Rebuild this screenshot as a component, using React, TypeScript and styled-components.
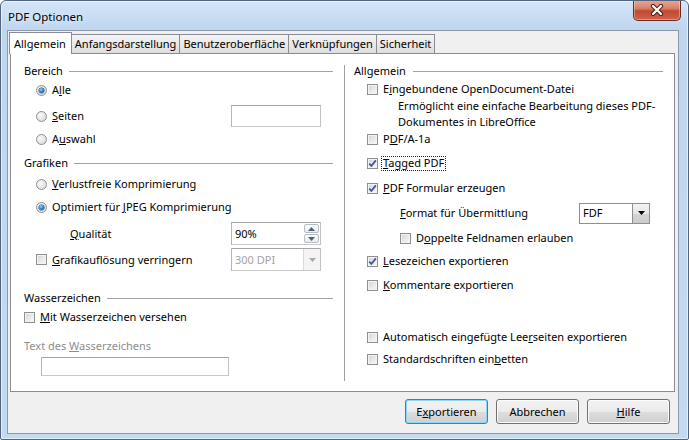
import React from "react";
import styled, { createGlobalStyle } from "styled-components";

const FONT = `"Noto Sans", "Open Sans", sans-serif`;

const GlobalStyle = createGlobalStyle`
  html, body { margin: 0; padding: 0; background: #ffffff; }
  body { font-family: ${FONT}; font-size: 11px; color: #000; }
  *, *::before, *::after { box-sizing: border-box; }
`;

const Window = styled.div`
  width: 689px;
  height: 440px;
  display: flex;
  flex-direction: column;
  border: 1px solid #52657c;
  border-radius: 6px 6px 2px 2px;
  background: linear-gradient(180deg, #d4e5f7 0px, #bfd6ef 29px, #c4daf1 100%);
  box-shadow: inset 0 0 0 1px rgba(255, 255, 255, 0.55);
  overflow: hidden;
`;

const TitleBar = styled.div`
  height: 29px;
  flex: none;
  display: flex;
  align-items: flex-start;
  padding-left: 7px;
`;

const Title = styled.div`
  margin-top: 8px;
  font-size: 11.5px;
  line-height: 16px;
  color: #000;
  text-shadow: 0 0 6px rgba(255, 255, 255, 0.9);
`;

const CloseButton = styled.div`
  margin-left: auto;
  margin-right: 7px;
  margin-top: -1px;
  width: 48px;
  height: 21px;
  border: 1px solid #6b2a20;
  border-top: none;
  border-radius: 0 0 5px 5px;
  background: linear-gradient(180deg, #e8a898 0%, #d98068 42%, #c24a31 55%, #d0614a 100%);
  box-shadow: inset 0 0 0 1px rgba(255, 255, 255, 0.35);
  display: flex;
  align-items: center;
  justify-content: center;
`;

const Client = styled.div`
  flex: 1;
  margin: 0 9px 5px 6px;
  border: 1px solid #8b99ab;
  background: #f0f0f0;
  display: flex;
  flex-direction: column;
`;

const TabStrip = styled.div`
  height: 22px;
  flex: none;
  display: flex;
  align-items: flex-end;
  padding-left: 1px;
  position: relative;
  z-index: 1;
`;

const Tab = styled.div<{ $active?: boolean }>`
  height: ${(p) => (p.$active ? 22 : 19)}px;
  margin-bottom: ${(p) => (p.$active ? -1 : 0)}px;
  margin-left: -1px;
  padding: 0 ${(p) => (p.$active ? 5 : 3)}px 0 ${(p) => (p.$active ? 4 : 3)}px;
  border: 1px solid #898c95;
  border-bottom: none;
  background: ${(p) =>
    p.$active ? "#ffffff" : "linear-gradient(180deg, #f4f4f4 0%, #e9e9e9 50%, #dedede 100%)"};
  position: relative;
  z-index: ${(p) => (p.$active ? 2 : 1)};
  display: flex;
  align-items: center;
  line-height: 16px;
  white-space: nowrap;
  &:first-child {
    margin-left: 0;
  }
`;

const Panel = styled.div`
  height: 339px;
  flex: none;
  margin: 0 3px 0 2px;
  border: 1px solid #898c95;
  background: #ffffff;
  display: grid;
  grid-template-columns: 333px 1px 1fr;
`;

const Column = styled.div<{ $pl: number; $pr: number }>`
  display: flex;
  flex-direction: column;
  padding: 0 ${(p) => p.$pr}px 0 ${(p) => p.$pl}px;
`;

const Separator = styled.div`
  margin: 11px 0 10px;
  background: #a0a0a0;
`;

const GroupHeader = styled.div<{ $mt: number; $gap?: number }>`
  display: flex;
  align-items: center;
  height: 16px;
  margin-top: ${(p) => p.$mt}px;
  line-height: 16px;
  white-space: nowrap;
  &::after {
    content: "";
    flex: 1;
    height: 1px;
    background: #a3a3a3;
    margin-left: ${(p) => p.$gap ?? 6}px;
  }
`;

const Row = styled.div<{ $mt?: number; $h?: number; $indent?: number }>`
  display: flex;
  align-items: center;
  gap: 5px;
  margin-top: ${(p) => p.$mt ?? 0}px;
  height: ${(p) => p.$h ?? 18}px;
  padding-left: ${(p) => p.$indent ?? 0}px;
  white-space: nowrap;
  line-height: 16px;
`;

const Label = styled.span<{ $disabled?: boolean }>`
  color: ${(p) => (p.$disabled ? "#8d8d8d" : "#000")};
`;

const FocusLabel = styled.span`
  line-height: 12px;
  padding: 0 1px 1px;
  margin-left: -2px;
  border: 1px dotted #222;
`;

const U = styled.span`
  text-decoration: underline;
  text-underline-offset: 1px;
`;

const Description = styled.div<{ $indent: number }>`
  padding-left: ${(p) => p.$indent}px;
  line-height: 16px;
  height: 32px;
`;

const Box = styled.span`
  width: 11px;
  height: 11px;
  flex: none;
  border: 1px solid #8e8f8f;
  background: linear-gradient(135deg, #cfd2d6 0%, #e9e9ea 55%, #f8f8f8 100%);
  box-shadow: inset 0 0 0 1px #f4f4f4;
  display: flex;
  align-items: center;
  justify-content: center;
`;

const RadioCircle = styled.span<{ $checked?: boolean }>`
  width: 11px;
  height: 11px;
  flex: none;
  border-radius: 50%;
  border: 1px solid #8e8f8f;
  background: radial-gradient(circle at 35% 35%, #fafafa 0%, #e4e4e4 60%, #cfcfcf 100%);
  display: flex;
  align-items: center;
  justify-content: center;
  &::after {
    content: "";
    display: ${(p) => (p.$checked ? "block" : "none")};
    width: 5px;
    height: 5px;
    border-radius: 50%;
    background: radial-gradient(circle at 40% 35%, #9bd8ff 0%, #2b86d6 45%, #0e3f7a 100%);
    box-shadow: 0 0 0 0.5px #1b4f86;
  }
`;

const Field = styled.div<{ $w: number; $h: number; $mr?: number; $ml?: number; $disabled?: boolean }>`
  width: ${(p) => p.$w}px;
  height: ${(p) => p.$h}px;
  flex: none;
  margin-left: ${(p) => (p.$ml === undefined ? "auto" : `${p.$ml}px`)};
  margin-right: ${(p) => p.$mr ?? 0}px;
  border: 1px solid #ababab;
  border-color: #a5a5a5 #c2c2c2 #c8c8c8 #b5b5b5;
  background: #ffffff;
  display: flex;
  align-items: stretch;
  color: ${(p) => (p.$disabled ? "#a3a3a3" : "#000")};
`;

const FieldText = styled.span`
  flex: 1;
  padding-left: 3px;
  display: flex;
  align-items: center;
  line-height: 16px;
`;

const SpinButtons = styled.div`
  width: 15px;
  margin: 1px 1px 1px 0;
  display: flex;
  flex-direction: column;
  gap: 1px;
`;

const SpinHalf = styled.div`
  flex: 1;
  border: 1px solid #b9bdc4;
  border-radius: 2px;
  background: linear-gradient(180deg, #fbfbfb 0%, #e9ebee 100%);
  display: flex;
  align-items: center;
  justify-content: center;
`;

const DropButton = styled.div<{ $disabled?: boolean }>`
  width: 17px;
  border-left: 1px solid ${(p) => (p.$disabled ? "#d9d9d9" : "#8e8f8f")};
  background: ${(p) =>
    p.$disabled
      ? "#f4f4f4"
      : "linear-gradient(180deg, #f4f4f4 0%, #e6e6e6 50%, #d5d5d5 51%, #cbcbcb 100%)"};
  display: flex;
  align-items: center;
  justify-content: center;
`;

const Combo = styled(Field)`
  border-color: #8e8f8f;
`;

const ButtonRow = styled.div`
  flex: 1;
  display: flex;
  justify-content: flex-end;
  align-items: flex-start;
  gap: 8px;
  padding: 7px 8px 0 0;
`;

const DialogButton = styled.button<{ $default?: boolean }>`
  width: 83px;
  height: 25px;
  padding: 0;
  font-family: ${FONT};
  font-size: 11px;
  color: #000;
  border: 1px solid ${(p) => (p.$default ? "#3c7fb1" : "#707070")};
  border-radius: 3px;
  background: linear-gradient(180deg, #f2f2f2 0%, #ebebeb 50%, #dddddd 51%, #cfcfcf 100%);
  box-shadow: inset 0 0 0 1px ${(p) => (p.$default ? "#8fd8f5" : "#fcfcfc")};
  line-height: 16px;
`;

const Check = () => (
  <svg width="9" height="9" viewBox="0 0 9 9">
    <path d="M1.2 4.6 L3.4 6.9 L7.9 1.4" fill="none" stroke="#42589a" strokeWidth="1.7" />
  </svg>
);

const Checkbox = ({ checked }: { checked?: boolean }) => <Box>{checked ? <Check /> : null}</Box>;

const Arrow = ({ up, color }: { up?: boolean; color: string }) => (
  <svg width="7" height="4" viewBox="0 0 7 4">
    <path d={up ? "M0 4 L3.5 0 L7 4 Z" : "M0 0 L7 0 L3.5 4 Z"} fill={color} />
  </svg>
);

const CloseX = () => (
  <svg width="14" height="12" viewBox="0 0 14 12">
    <path d="M3 2 L11 10 M11 2 L3 10" stroke="#4a1c14" strokeWidth="4.2" strokeLinecap="round" />
    <path d="M3 2 L11 10 M11 2 L3 10" stroke="#ffffff" strokeWidth="2.3" strokeLinecap="round" />
  </svg>
);

export default function App() {
  return (
    <>
      <GlobalStyle />
      <Window>
        <TitleBar>
          <Title>PDF Optionen</Title>
          <CloseButton>
            <CloseX />
          </CloseButton>
        </TitleBar>
        <Client>
          <TabStrip>
            <Tab $active>Allgemein</Tab>
            <Tab>Anfangsdarstellung</Tab>
            <Tab>Benutzeroberfläche</Tab>
            <Tab>Verknüpfungen</Tab>
            <Tab>Sicherheit</Tab>
          </TabStrip>
          <Panel>
            <Column $pl={13} $pr={11}>
              <GroupHeader $mt={9}>Bereich</GroupHeader>
              <Row $mt={2} $indent={12}>
                <RadioCircle $checked />
                <Label>
                  A<U>l</U>le
                </Label>
              </Row>
              <Row $mt={6} $h={22} $indent={12}>
                <RadioCircle />
                <Label>
                  <U>S</U>eiten
                </Label>
                <Field $w={90} $h={22} $mr={12} />
              </Row>
              <Row $mt={3} $indent={12}>
                <RadioCircle />
                <Label>
                  A<U>u</U>swahl
                </Label>
              </Row>
              <GroupHeader $mt={7}>Grafiken</GroupHeader>
              <Row $mt={4} $indent={12}>
                <RadioCircle />
                <Label>
                  <U>V</U>erlustfreie Komprimierung
                </Label>
              </Row>
              <Row $mt={5} $indent={12}>
                <RadioCircle $checked />
                <Label>
                  Optimiert für <U>J</U>PEG Komprimierung
                </Label>
              </Row>
              <Row $mt={6} $h={23} $indent={46}>
                <Label>
                  <U>Q</U>ualität
                </Label>
                <Field $w={90} $h={23} $mr={12}>
                  <FieldText>90%</FieldText>
                  <SpinButtons>
                    <SpinHalf>
                      <Arrow up color="#4c607f" />
                    </SpinHalf>
                    <SpinHalf>
                      <Arrow color="#4c607f" />
                    </SpinHalf>
                  </SpinButtons>
                </Field>
              </Row>
              <Row $mt={3} $h={23} $indent={12}>
                <Checkbox />
                <Label>
                  <U>G</U>rafikauflösung verringern
                </Label>
                <Field $w={90} $h={23} $mr={12} $disabled>
                  <FieldText>300 DPI</FieldText>
                  <DropButton $disabled>
                    <Arrow color="#a8a8a8" />
                  </DropButton>
                </Field>
              </Row>
              <GroupHeader $mt={19}>Wasserzeichen</GroupHeader>
              <Row $mt={2}>
                <Checkbox />
                <Label>
                  <U>M</U>it Wasserzeichen versehen
                </Label>
              </Row>
              <Row $mt={11}>
                <Label $disabled>
                  Text des <U>W</U>asserzeichens
                </Label>
              </Row>
              <Row $mt={2} $h={19} $indent={17}>
                <Field $w={188} $h={19} $ml={0} />
              </Row>
            </Column>
            <Separator />
            <Column $pl={9} $pr={11}>
              <GroupHeader $mt={9} $gap={7}>
                Allgemein
              </GroupHeader>
              <Row $mt={1} $indent={13}>
                <Checkbox />
                <Label>
                  E<U>i</U>ngebundene OpenDocument-Datei
                </Label>
              </Row>
              <Description $indent={44}>
                Ermöglicht eine einfache Bearbeitung dieses PDF-
                <br />
                Dokumentes in LibreOffice
              </Description>
              <Row $mt={0} $indent={13}>
                <Checkbox />
                <Label>
                  P<U>D</U>F/A-1a
                </Label>
              </Row>
              <Row $mt={6} $indent={13}>
                <Checkbox checked />
                <FocusLabel>
                  <U>T</U>agged PDF
                </FocusLabel>
              </Row>
              <Row $mt={7} $indent={13}>
                <Checkbox checked />
                <Label>
                  <U>P</U>DF Formular erzeugen
                </Label>
              </Row>
              <Row $mt={5} $h={22} $indent={46}>
                <Label>
                  <U>F</U>ormat für Übermittlung
                </Label>
                <Combo $w={71} $h={21} $mr={13}>
                  <FieldText>FDF</FieldText>
                  <DropButton>
                    <Arrow color="#000" />
                  </DropButton>
                </Combo>
              </Row>
              <Row $mt={5} $indent={46}>
                <Checkbox />
                <Label>
                  D<U>o</U>ppelte Feldnamen erlauben
                </Label>
              </Row>
              <Row $mt={5} $indent={13}>
                <Checkbox checked />
                <Label>
                  <U>L</U>esezeichen exportieren
                </Label>
              </Row>
              <Row $mt={6} $indent={13}>
                <Checkbox />
                <Label>
                  <U>K</U>ommentare exportieren
                </Label>
              </Row>
              <Row $mt={34} $indent={13}>
                <Checkbox />
                <Label>
                  Automatisch eingefügte Lee<U>r</U>seiten exportieren
                </Label>
              </Row>
              <Row $mt={4} $indent={13}>
                <Checkbox />
                <Label>
                  Standardschriften ein<U>b</U>etten
                </Label>
              </Row>
            </Column>
          </Panel>
          <ButtonRow>
            <DialogButton $default>
              E<U>x</U>portieren
            </DialogButton>
            <DialogButton>Abbrechen</DialogButton>
            <DialogButton>
              <U>H</U>ilfe
            </DialogButton>
          </ButtonRow>
        </Client>
      </Window>
    </>
  );
}
